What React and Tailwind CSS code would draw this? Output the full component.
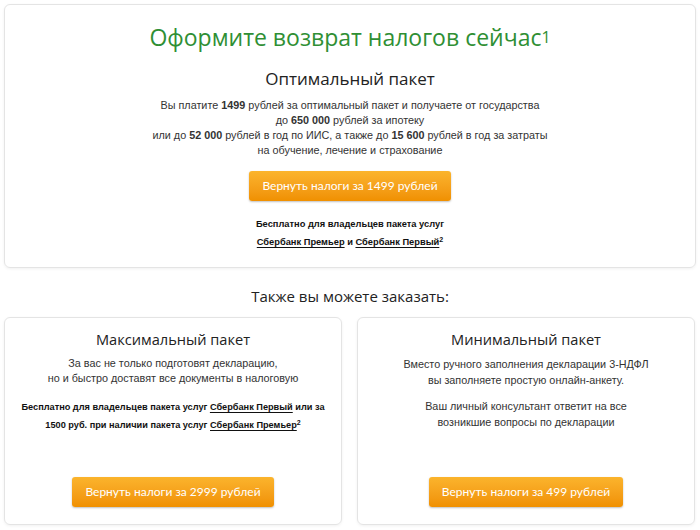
import React from 'react';

const sans = { fontFamily: '"Open Sans", "Liberation Sans", sans-serif' };

function OrangeButton({ children }) {
  return (
    <button
      type="button"
      className="h-[30px] rounded-[3px] bg-gradient-to-b from-[#fbb42c] to-[#f09000] px-[13px] text-[12px] text-white shadow-[0_1px_2px_rgba(0,0,0,0.25)] font-['Lato',sans-serif]"
    >
      {children}
    </button>
  );
}

function Link({ children }) {
  return <span className="underline underline-offset-2">{children}</span>;
}

export default function App() {
  return (
    <div className="min-h-[530px] w-[700px] bg-white pt-[4px] text-[#333] font-['Liberation_Sans',Arial,sans-serif]">
      <section className="mx-[4px] rounded-[6px] border border-[#e4e4e4] pt-[16px] pb-[16px] text-center shadow-[0_1px_3px_rgba(0,0,0,0.06)]">
        <h1 className="text-[23px] leading-[32px] text-[#2f8f34] font-['Open_Sans',sans-serif]">
          Оформите возврат налогов сейчас<sup className="relative -top-[3px] text-[16px]">1</sup>
        </h1>
        <h2 className="mt-[14px] text-[17px] leading-[24px] text-[#222] font-['Open_Sans',sans-serif]">Оптимальный пакет</h2>
        <p className="mt-[7px] text-[10.8px] leading-[15px]">
          Вы платите <b>1499</b> рублей за оптимальный пакет и получаете от государства
          <br />
          до <b>650 000</b> рублей за ипотеку
          <br />
          или до <b>52 000</b> рублей в год по ИИС, а также до <b>15 600</b> рублей в год за затраты
          <br />
          на обучение, лечение и страхование
        </p>
        <div className="mt-[13px]">
          <OrangeButton>Вернуть налоги за 1499 рублей</OrangeButton>
        </div>
        <p className="mt-[14px] text-[9.3px] font-bold leading-[18px] text-[#111]">
          Бесплатно для владельцев пакета услуг
          <br />
          <Link>Сбербанк Премьер</Link> и <Link>Сбербанк Первый</Link>
          <sup className="text-[7px]">2</sup>
        </p>
      </section>

      <h3 className="mt-[17px] text-center text-[15px] leading-[22px] text-[#222]" style={sans}>
        Также вы можете заказать:
      </h3>

      <div className="mt-[10px] grid grid-cols-2 gap-[15px] pl-[4px] pr-[5px]">
        <div className="flex h-[208px] flex-col items-center rounded-[6px] border border-[#e4e4e4] pt-[10px] pb-[17px] text-center shadow-[0_1px_3px_rgba(0,0,0,0.06)]">
          <h4 className="text-[14.6px] leading-[22px] text-[#222]" style={sans}>Максимальный пакет</h4>
          <p className="mt-[6px] text-[10.8px] leading-[15px]">
            За вас не только подготовят декларацию,
            <br />
            но и быстро доставят все документы в налоговую
          </p>
          <p className="mt-[12px] text-[9.2px] font-bold leading-[18px] text-[#111]">
            Бесплатно для владельцев пакета услуг <Link>Сбербанк Первый</Link> или за
            <br />
            1500 руб. при наличии пакета услуг <Link>Сбербанк Премьер</Link>
            <sup className="text-[7px]">2</sup>
          </p>
          <div className="mt-auto">
            <OrangeButton>Вернуть налоги за 2999 рублей</OrangeButton>
          </div>
        </div>

        <div className="flex h-[208px] flex-col items-center rounded-[6px] border border-[#e4e4e4] pt-[10px] pb-[17px] text-center shadow-[0_1px_3px_rgba(0,0,0,0.06)]">
          <h4 className="text-[14.6px] leading-[22px] text-[#222]" style={sans}>Минимальный пакет</h4>
          <p className="mt-[6px] text-[10.8px] leading-[16px]">
            Вместо ручного заполнения декларации 3-НДФЛ
            <br />
            вы заполняете простую онлайн-анкету.
          </p>
          <p className="mt-[10px] text-[10.8px] leading-[16px]">
            Ваш личный консультант ответит на все
            <br />
            возникшие вопросы по декларации
          </p>
          <div className="mt-auto">
            <OrangeButton>Вернуть налоги за 499 рублей</OrangeButton>
          </div>
        </div>
      </div>
    </div>
  );
}
